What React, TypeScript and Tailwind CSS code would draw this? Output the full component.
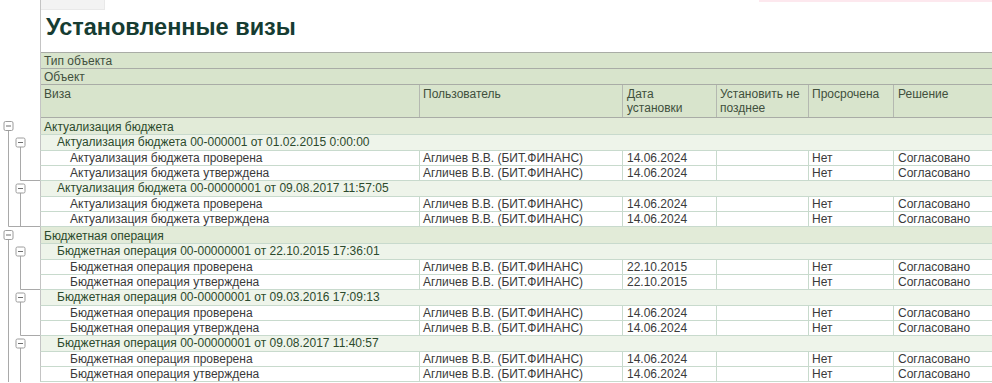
type Kind = 'group' | 'sub' | 'data';

type Row = {
  kind: Kind;
  text: string;
  user?: string;
  date?: string;
  overdue?: string;
  decision?: string;
  lastInSub?: boolean;
  lastInGroup?: boolean;
};

const USER = 'Агличев В.В. (БИТ.ФИНАНС)';

const visa = (text: string, date: string, lastInSub = false, lastInGroup = false): Row => ({
  kind: 'data',
  text,
  user: USER,
  date,
  overdue: 'Нет',
  decision: 'Согласовано',
  lastInSub,
  lastInGroup,
});

const rows: Row[] = [
  { kind: 'group', text: 'Актуализация бюджета' },
  { kind: 'sub', text: 'Актуализация бюджета 00-000001 от 01.02.2015 0:00:00' },
  visa('Актуализация бюджета проверена', '14.06.2024'),
  visa('Актуализация бюджета утверждена', '14.06.2024', true),
  { kind: 'sub', text: 'Актуализация бюджета 00-00000001 от 09.08.2017 11:57:05' },
  visa('Актуализация бюджета проверена', '14.06.2024'),
  visa('Актуализация бюджета утверждена', '14.06.2024', true, true),
  { kind: 'group', text: 'Бюджетная операция' },
  { kind: 'sub', text: 'Бюджетная операция 00-00000001 от 22.10.2015 17:36:01' },
  visa('Бюджетная операция проверена', '22.10.2015'),
  visa('Бюджетная операция утверждена', '22.10.2015', true),
  { kind: 'sub', text: 'Бюджетная операция 00-00000001 от 09.03.2016 17:09:13' },
  visa('Бюджетная операция проверена', '14.06.2024'),
  visa('Бюджетная операция утверждена', '14.06.2024', true),
  { kind: 'sub', text: 'Бюджетная операция 00-00000001 от 09.08.2017 11:40:57' },
  visa('Бюджетная операция проверена', '14.06.2024'),
  visa('Бюджетная операция утверждена', '14.06.2024'),
];

const LINE = '#a9a9a9';

const MinusBox = ({ cx, cy }: { cx: number; cy: number }) => (
  <g>
    <rect x={cx - 4.5} y={cy - 4.5} width={9} height={9} rx={1.5} fill="#fff" stroke="#9c9c9c" />
    <line x1={cx - 2.5} y1={cy} x2={cx + 2.5} y2={cy} stroke="#6f6f6f" />
  </g>
);

// connector lines of the tree in the left gutter
const TreeCell = ({ row, h }: { row: Row; h: number }) => {
  const cy = h / 2 - 0.5;
  return (
    <svg width={40} height={h} className="block shrink-0">
      {row.kind === 'group' && (
        <>
          <line x1={8.5} y1={cy + 4.5} x2={8.5} y2={h} stroke={LINE} />
          <MinusBox cx={8.5} cy={cy} />
        </>
      )}
      {row.kind === 'sub' && (
        <>
          <line x1={8.5} y1={0} x2={8.5} y2={h} stroke={LINE} />
          <line x1={20.5} y1={cy + 4.5} x2={20.5} y2={h} stroke={LINE} />
          <MinusBox cx={20.5} cy={cy} />
        </>
      )}
      {row.kind === 'data' && (
        <>
          <line x1={8.5} y1={0} x2={8.5} y2={row.lastInGroup ? h - 0.5 : h} stroke={LINE} />
          <line x1={20.5} y1={0} x2={20.5} y2={row.lastInSub ? h - 0.5 : h} stroke={LINE} />
          {row.lastInGroup ? (
            <line x1={8.5} y1={h - 0.5} x2={40} y2={h - 0.5} stroke={LINE} />
          ) : (
            row.lastInSub && <line x1={20.5} y1={h - 0.5} x2={40} y2={h - 0.5} stroke={LINE} />
          )}
        </>
      )}
    </svg>
  );
};

const BodyRow = ({ row }: { row: Row }) => {
  if (row.kind !== 'data') {
    const h = row.kind === 'group' ? 17 : 16;
    return (
      <div className="flex">
        <TreeCell row={row} h={h} />
        <div
          className={
            row.kind === 'group'
              ? 'flex-1 h-[17px] border-l border-b border-l-[#c4c4c4] border-b-[#c8dacd] bg-[#e2ebd8] pl-[3px] pt-[1px] leading-[16px] text-[#2c4a2c]'
              : 'flex-1 h-[16px] border-l border-b border-l-[#c4c4c4] border-b-[#c8dacd] bg-[#eef4ea] pl-[16px] leading-[15px] text-[#2c4a2c]'
          }
        >
          {row.text}
        </div>
      </div>
    );
  }
  return (
    <div className="flex">
      <TreeCell row={row} h={15} />
      <div className="flex-1 h-[15px] border-l border-b border-l-[#c4c4c4] border-b-[#c8dacd] bg-white grid grid-cols-[378px_203px_94px_92px_85px_1fr] leading-[14px] text-[#3a3a3a]">
        <div className="pl-[29px] whitespace-nowrap">{row.text}</div>
        <div className="pl-[3px] border-l border-[#c8dacd] whitespace-nowrap">{row.user}</div>
        <div className="pl-[4px] border-l border-[#c8dacd]">{row.date}</div>
        <div className="border-l border-[#c8dacd]" />
        <div className="pl-[3px] border-l border-[#c8dacd]">{row.overdue}</div>
        <div className="pl-[4px] border-l border-[#c8dacd]">{row.decision}</div>
      </div>
    </div>
  );
};

export default function App() {
  return (
    <div className="w-[992px] h-[383px] overflow-hidden bg-white font-['Liberation_Sans',Arial,sans-serif] text-[12px]">
      {/* title */}
      <div className="flex h-[52px]">
        <div className="w-[41px] shrink-0 border-r border-[#c4c4c4]" />
        <div className="flex-1 flex flex-col">
          <div className="flex justify-between">
            <div className="w-[64px] h-[10px] bg-[#f3f3f3] border-r border-b border-[#e9e9e9]" />
            <div className="w-[233px] h-[2px] bg-[#fde8ee]" />
          </div>
          <h1 className="pl-[5px] pt-[3px] text-[23.5px] leading-[28px] font-bold text-[#163c32]">
            Установленные визы
          </h1>
        </div>
      </div>

      {/* table header */}
      <div className="flex">
        <div className="w-[41px] shrink-0 border-r border-[#c4c4c4]" />
        <div className="flex-1 bg-[#d8e4cc] text-[#41503d]">
          <div className="h-[16px] border-t border-[#a9aca6] pl-[3px] pt-[1px] leading-[15px]">Тип объекта</div>
          <div className="h-[16px] border-t border-[#a9aca6] pl-[3px] pt-[1px] leading-[15px]">Объект</div>
          <div className="h-[34px] border-t border-b border-[#a9aca6] grid grid-cols-[378px_203px_94px_92px_85px_1fr] leading-[14px]">
            <div className="pl-[3px] pt-[2px]">Виза</div>
            <div className="pl-[3px] pt-[2px] border-l border-[#b4b8b0]">Пользователь</div>
            <div className="pl-[4px] pt-[2px] border-l border-[#b4b8b0]">
              Дата
              <br />
              установки
            </div>
            <div className="pl-[3px] pt-[2px] border-l border-[#b4b8b0]">
              Установить не
              <br />
              позднее
            </div>
            <div className="pl-[3px] pt-[2px] border-l border-[#b4b8b0]">Просрочена</div>
            <div className="pl-[4px] pt-[2px] border-l border-[#b4b8b0]">Решение</div>
          </div>
        </div>
      </div>

      {/* body */}
      <div className="flex flex-col">
        {rows.map((row, i) => (
          <BodyRow key={i} row={row} />
        ))}
      </div>
    </div>
  );
}
